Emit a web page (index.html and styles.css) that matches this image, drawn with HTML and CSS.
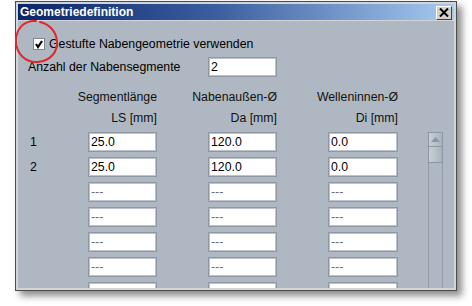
FILE: index.html
```html
<!DOCTYPE html>
<html lang="de">
<head>
  <meta charset="UTF-8">
  <title>Geometriedefinition</title>
  <link rel="stylesheet" href="styles.css">
</head>
<body>
  <div class="window">
    <div class="titlebar">
      <span class="title">Geometriedefinition</span>
      <span class="close">
        <svg width="10" height="9" viewBox="0 0 10 9"><path d="M1 0.5 L9 8.5 M9 0.5 L1 8.5" stroke="#000" stroke-width="2"/></svg>
      </span>
    </div>

    <div class="content">
      <div class="check-row">
        <span class="checkbox">
          <svg width="10" height="10" viewBox="0 0 10 10"><path d="M2 5 L4 8 L8 2" stroke="#000" stroke-width="2.2" fill="none"/></svg>
        </span>
        <span>Gestufte Nabengeometrie verwenden</span>
      </div>

      <div class="count-row">
        <span class="count-label">Anzahl der Nabensegmente</span>
        <input class="field" type="text" value="2">
      </div>

      <div class="table-wrap">
        <div class="grid">
          <span></span>
          <span class="head">Segmentlänge</span>
          <span class="head">Nabenaußen-Ø</span>
          <span class="head">Welleninnen-Ø</span>

          <span></span>
          <span class="head">LS [mm]</span>
          <span class="head">Da [mm]</span>
          <span class="head">Di [mm]</span>

          <span class="num">1</span>
          <input class="field" type="text" value="25.0">
          <input class="field" type="text" value="120.0">
          <input class="field" type="text" value="0.0">

          <span class="num">2</span>
          <input class="field" type="text" value="25.0">
          <input class="field" type="text" value="120.0">
          <input class="field" type="text" value="0.0">

          <span></span>
          <input class="field" type="text" placeholder="---">
          <input class="field" type="text" placeholder="---">
          <input class="field" type="text" placeholder="---">

          <span></span>
          <input class="field" type="text" placeholder="---">
          <input class="field" type="text" placeholder="---">
          <input class="field" type="text" placeholder="---">

          <span></span>
          <input class="field" type="text" placeholder="---">
          <input class="field" type="text" placeholder="---">
          <input class="field" type="text" placeholder="---">

          <span></span>
          <input class="field" type="text" placeholder="---">
          <input class="field" type="text" placeholder="---">
          <input class="field" type="text" placeholder="---">

          <span></span>
          <input class="field" type="text" placeholder="---">
          <input class="field" type="text" placeholder="---">
          <input class="field" type="text" placeholder="---">
        </div>

        <div class="scrollbar">
          <div class="sb-button">
            <svg width="9" height="5" viewBox="0 0 9 5"><path d="M0 5 L4.5 0 L9 5 Z" fill="#8c959f"/></svg>
          </div>
          <div class="sb-thumb"></div>
          <div class="sb-track"></div>
        </div>
      </div>
    </div>
  </div>

  <!-- hand drawn marker round the checkbox -->
  <svg class="marker" width="48" height="48" viewBox="0 0 48 48">
    <path d="M22 2 C 10 1, 2 10, 2 22 C 2 35, 12 44, 24 43 C 36 42, 44 33, 43 22 C 42 12, 35 5, 26 3"
          stroke="#e3262b" stroke-width="2" fill="none" stroke-linecap="round"/>
  </svg>
</body>
</html>
```

FILE: styles.css
```css
* { margin: 0; padding: 0; box-sizing: border-box; }
body {
  background: #fff;
  font-family: "Liberation Sans", Arial, sans-serif;
  font-size: 12.3px;
  color: #000;
  width: 472px;
  height: 306px;
  overflow: hidden;
}
.window {
  width: 442px;
  height: 290px;
  margin: 1px 0 0 15px;
  border: 1px solid #4c4c4c;
  padding: 2px;
  background: #d2d4d8;
  box-shadow: 5px 5px 7px rgba(0, 0, 0, 0.45);
  display: flex;
  flex-direction: column;
}
.titlebar {
  height: 17px;
  background: linear-gradient(to right, #0a246a 0%, #3a5e9e 45%, #a6caf0 100%);
  border-bottom: 1px solid #d2d4d8;
  display: flex;
  align-items: center;
  justify-content: space-between;
  padding: 0 2px 0 2px;
}
.title {
  color: #fff;
  font-weight: bold;
  font-size: 12px;
}
.close {
  width: 16px;
  height: 14px;
  margin-top: 1px;
  background: #d4d0c8;
  border: 1px solid;
  border-color: #fff #404040 #404040 #fff;
  display: flex;
  align-items: center;
  justify-content: center;
}
.content {
  flex: 1;
  background: #afb8c2;
  padding-top: 16px;
  overflow: hidden;
}
.check-row {
  display: flex;
  align-items: center;
  gap: 4px;
  height: 13px;
  padding-left: 15px;
}
.checkbox {
  width: 12px;
  height: 12px;
  background: #fff;
  border: 1px solid #7f8790;
  display: flex;
  align-items: center;
  justify-content: center;
}
.count-row {
  display: flex;
  align-items: center;
  margin-top: 7px;
  padding-left: 10px;
}
.count-label {
  width: 180px;
}
.field {
  width: 69px;
  height: 20px;
  border: 1px solid #8f98a2;
  box-shadow: inset 0 0 0 1px #bcc3ca;
  background: #fff;
  font-family: "Liberation Sans", Arial, sans-serif;
  font-size: 12.3px;
  color: #000;
  padding: 0 2px;
  outline: none;
}
.field::placeholder {
  color: #6e6e6e;
}
.table-wrap {
  display: flex;
  align-items: flex-start;
  margin-top: 13px;
  padding-left: 10px;
}
.grid {
  display: grid;
  grid-template-columns: 9px 69px 69px 70px;
  grid-auto-rows: 20px;
  grid-template-rows: 16px 16px;
  column-gap: 51px;
  row-gap: 5px;
}
.grid .field:nth-child(4n) {
  width: 70px;
}
.head {
  justify-self: end;
  white-space: nowrap;
  line-height: 15px;
  color: #111;
}
.num {
  line-height: 20px;
  padding-left: 2px;
}
.scrollbar {
  margin-left: 30px;
  margin-top: 42px;
  width: 15px;
  height: 200px;
  display: flex;
  flex-direction: column;
}
.sb-button,
.sb-thumb {
  height: 15px;
  border: 1px solid #8d97a1;
  background: linear-gradient(to right, #c9d0d7, #a9b2bc);
  display: flex;
  align-items: center;
  justify-content: center;
}
.sb-thumb {
  height: 16px;
  border-top: none;
}
.sb-track {
  flex: 1;
  border-left: 1px solid #939ca6;
  border-right: 1px solid #939ca6;
}
.marker {
  position: absolute;
  left: 14px;
  top: 19px;
}
```
